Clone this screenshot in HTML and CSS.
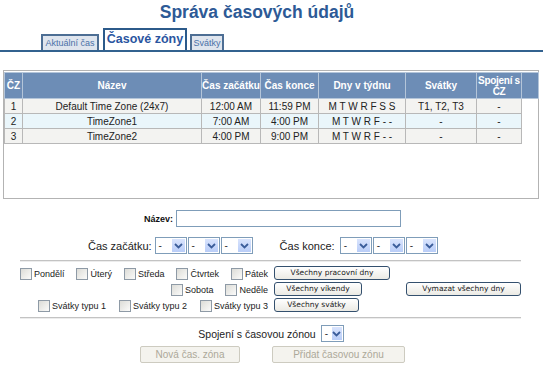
FILE: index.html
```html
<!DOCTYPE html>
<html lang="cs">
<head>
<meta charset="utf-8">
<title>Správa časových údajů</title>
<link rel="stylesheet" href="styles.css">
</head>
<body>
<h1 class="title">Správa časových údajů</h1>
<div class="tabs">
  <div class="tab tab-now">Aktuální čas</div>
  <div class="tab tab-active">Časové zóny</div>
  <div class="tab tab-hol">Svátky</div>
</div>

<div class="grid-box">
  <table class="grid">
    <colgroup>
      <col class="w-id"><col class="w-name"><col class="w-start"><col class="w-end"><col class="w-days"><col class="w-hol"><col class="w-link"><col class="w-scroll">
    </colgroup>
    <thead>
      <tr><th>ČZ</th><th>Název</th><th>Čas začátku</th><th>Čas konce</th><th>Dny v týdnu</th><th>Svátky</th><th class="th-link">Spojení s<br>ČZ</th><th></th></tr>
    </thead>
    <tbody>
      <tr class="r-odd"><td>1</td><td>Default Time Zone (24x7)</td><td>12:00 AM</td><td>11:59 PM</td><td>M T W R F S S</td><td>T1, T2, T3</td><td>-</td><td class="blank"></td></tr>
      <tr class="r-even"><td>2</td><td>TimeZone1</td><td>7:00 AM</td><td>4:00 PM</td><td>M T W R F - -</td><td>-</td><td>-</td><td class="blank"></td></tr>
      <tr class="r-odd"><td>3</td><td>TimeZone2</td><td>4:00 PM</td><td>9:00 PM</td><td>M T W R F - -</td><td>-</td><td>-</td><td class="blank"></td></tr>
    </tbody>
  </table>
</div>

<div class="name-row">
  <span class="name-label">Název:</span>
  <span class="text-input"></span>
</div>

<div class="time-row">
  <span class="time-label">Čas začátku:</span>
  <span class="sel"><span class="sel-val">-</span><span class="sel-btn"><svg viewBox="0 0 9 6" width="9" height="6"><path d="M1 1 L4.5 4.5 L8 1" fill="none" stroke="#3b5d9a" stroke-width="1.8"/></svg></span></span>
  <span class="sel"><span class="sel-val">-</span><span class="sel-btn"><svg viewBox="0 0 9 6" width="9" height="6"><path d="M1 1 L4.5 4.5 L8 1" fill="none" stroke="#3b5d9a" stroke-width="1.8"/></svg></span></span>
  <span class="sel"><span class="sel-val">-</span><span class="sel-btn"><svg viewBox="0 0 9 6" width="9" height="6"><path d="M1 1 L4.5 4.5 L8 1" fill="none" stroke="#3b5d9a" stroke-width="1.8"/></svg></span></span>
  <span class="time-label end-label">Čas konce:</span>
  <span class="sel"><span class="sel-val">-</span><span class="sel-btn"><svg viewBox="0 0 9 6" width="9" height="6"><path d="M1 1 L4.5 4.5 L8 1" fill="none" stroke="#3b5d9a" stroke-width="1.8"/></svg></span></span>
  <span class="sel"><span class="sel-val">-</span><span class="sel-btn"><svg viewBox="0 0 9 6" width="9" height="6"><path d="M1 1 L4.5 4.5 L8 1" fill="none" stroke="#3b5d9a" stroke-width="1.8"/></svg></span></span>
  <span class="sel"><span class="sel-val">-</span><span class="sel-btn"><svg viewBox="0 0 9 6" width="9" height="6"><path d="M1 1 L4.5 4.5 L8 1" fill="none" stroke="#3b5d9a" stroke-width="1.8"/></svg></span></span>
</div>

<div class="sep"></div>

<div class="days">
  <div class="checks row1">
    <span class="chk"><span class="box"></span>Pondělí</span>
    <span class="chk"><span class="box"></span>Úterý</span>
    <span class="chk"><span class="box"></span>Středa</span>
    <span class="chk"><span class="box"></span>Čtvrtek</span>
    <span class="chk"><span class="box"></span>Pátek</span>
  </div>
  <div class="btn-cell"><span class="btn b-work">Všechny pracovní dny</span></div>
  <div class="btn-cell"></div>

  <div class="checks row2">
    <span class="chk"><span class="box"></span>Sobota</span>
    <span class="chk"><span class="box"></span>Neděle</span>
  </div>
  <div class="btn-cell"><span class="btn b-week">Všechny víkendy</span></div>
  <div class="btn-cell"><span class="btn b-clear">Vymazat všechny dny</span></div>

  <div class="checks row3">
    <span class="chk"><span class="box"></span>Svátky typu 1</span>
    <span class="chk"><span class="box"></span>Svátky typu 2</span>
    <span class="chk"><span class="box"></span>Svátky typu 3</span>
  </div>
  <div class="btn-cell"><span class="btn b-hol">Všechny svátky</span></div>
  <div class="btn-cell"></div>
</div>

<div class="sep sep2"></div>

<div class="link-row">
  <span class="link-label">Spojení s časovou zónou</span>
  <span class="sel sel-small"><span class="sel-val">-</span><span class="sel-btn"><svg viewBox="0 0 9 6" width="9" height="6"><path d="M1 1 L4.5 4.5 L8 1" fill="none" stroke="#3b5d9a" stroke-width="1.8"/></svg></span></span>
</div>

<div class="actions">
  <span class="dbtn d-new">Nová čas. zóna</span>
  <span class="dbtn d-add">Přidat časovou zónu</span>
</div>
</body>
</html>
```

FILE: styles.css
```css
* { box-sizing: border-box; }

body {
  margin: 0;
  width: 543px;
  height: 376px;
  overflow: hidden;
  background: #ffffff;
  font-family: "Liberation Sans", Arial, sans-serif;
  color: #222222;
}

.title {
  margin: 0;
  height: 24px;
  line-height: 24px;
  padding-right: 29px;
  text-align: center;
  font-size: 17.5px;
  font-weight: bold;
  color: #2d5a96;
}

/* tabs */
.tabs {
  margin-top: 4px;
  height: 24px;
  display: flex;
  align-items: flex-end;
  padding-left: 41px;
  border-bottom: 2px solid #33628f;
}

.tab {
  height: 16px;
  border: 2px solid #4d6e94;
  border-bottom: none;
  background: #dfe5ee;
  color: #4b71a8;
  font-size: 9px;
  line-height: 14px;
  text-align: center;
  white-space: nowrap;
}

.tab-now { width: 58px; }
.tab-hol { width: 34px; margin-left: 3px; }

.tab-active {
  width: 84px;
  height: 22px;
  margin-left: 4px;
  border-color: #2c5a8a;
  background: #ffffff;
  color: #2a55a0;
  font-size: 12.5px;
  font-weight: bold;
  line-height: 19px;
}

/* grid */
.grid-box {
  margin: 18px 0 0 3px;
  width: 536px;
  height: 129px;
  border: 1px solid #b3b3b3;
  padding-top: 1px;
  background: #ffffff;
}

.grid {
  width: 534px;
  border-collapse: collapse;
  table-layout: fixed;
}

.w-id { width: 18px; }
.w-name { width: 179px; }
.w-start { width: 59px; }
.w-end { width: 58px; }
.w-days { width: 87px; }
.w-hol { width: 71px; }
.w-link { width: 45px; }
.w-scroll { width: 17px; }

.grid th {
  height: 26px;
  padding: 0;
  background: #6d8db6;
  color: #ffffff;
  font-size: 10px;
  font-weight: bold;
  line-height: 11px;
  border: 1px solid #b4c5d9;
  text-align: center;
  white-space: nowrap;
  overflow: hidden;
}

.grid th.th-link {
  letter-spacing: -0.3px;
}

.grid td {
  height: 15px;
  padding: 0;
  font-size: 10px;
  line-height: 13px;
  text-align: center;
  border: 1px solid #b8b8b8;
  color: #222222;
  white-space: nowrap;
}

.r-odd td { background: #f3f3f1; }
.r-even td { background: #eaf6fb; }

.grid td.blank {
  background: transparent;
  border: none;
}

/* name row */
.name-row {
  margin-top: 11px;
  display: flex;
  justify-content: center;
  align-items: center;
  height: 17px;
  padding-left: 2px;
}

.name-label {
  font-size: 9px;
  font-weight: bold;
  margin-right: 3px;
  color: #111111;
}

.text-input {
  width: 225px;
  height: 17px;
  border: 1px solid #7f9db9;
  background: #ffffff;
}

/* time row */
.time-row {
  margin-top: 10px;
  height: 17px;
  display: flex;
  align-items: center;
  padding-left: 88px;
}

.time-label {
  font-size: 11px;
  color: #222222;
  margin-right: 3px;
  white-space: nowrap;
}

.end-label {
  margin-left: 26px;
  margin-right: 5px;
}

.sel {
  width: 32px;
  height: 17px;
  border: 1px solid #7f9db9;
  background: #ffffff;
  display: flex;
  align-items: stretch;
  justify-content: space-between;
  margin-right: 1px;
  flex-shrink: 0;
}

.sel-val {
  font-size: 10px;
  line-height: 15px;
  padding-left: 3px;
  color: #333333;
}

.sel-btn {
  width: 15px;
  background: linear-gradient(#d9e4fd, #b9cdf8);
  border: 1px solid #ffffff;
  display: flex;
  align-items: center;
  justify-content: center;
}

.sel-small { width: 23px; }
.sel-small .sel-btn { width: 12px; }

/* separators */
.sep {
  margin: 6px 22px 0 20px;
  height: 2px;
  border-top: 1px solid #c3c3c3;
  border-bottom: 1px solid #ececec;
}

.sep2 { margin-top: 3px; }

/* day checkboxes */
.days {
  margin: 4px 22px 0 20px;
  display: grid;
  grid-template-columns: 250px 128px 115px;
  column-gap: 4px;
  grid-auto-rows: 16px;
}

.checks {
  display: flex;
  justify-content: flex-end;
  align-items: center;
  padding-right: 2px;
  white-space: nowrap;
}

.chk {
  display: flex;
  align-items: center;
  font-size: 9px;
  color: #222222;
  margin-left: 12px;
  flex-shrink: 0;
  white-space: nowrap;
}

.row3 .chk { margin-left: 13px; }

.box {
  width: 12px;
  height: 12px;
  border: 1px solid #8e9aa6;
  background: linear-gradient(135deg, #dcdcd7, #fbfbfa);
  margin-right: 2px;
  flex-shrink: 0;
}

.btn-cell {
  display: flex;
  align-items: flex-start;
}

.btn {
  height: 14px;
  border: 1px solid #34506e;
  border-radius: 3px;
  background: linear-gradient(#ffffff, #ebeae4);
  font-family: "DejaVu Sans", Verdana, sans-serif;
  font-size: 7.5px;
  line-height: 12px;
  text-align: center;
  color: #1a1a1a;
  white-space: nowrap;
}

.b-work { width: 116px; }
.b-week { width: 88px; }
.b-hol { width: 85px; }
.b-clear { width: 115px; }

/* link row */
.link-row {
  margin-top: 6px;
  height: 17px;
  display: flex;
  justify-content: center;
  align-items: center;
}

.link-label {
  font-size: 10.5px;
  margin-right: 5px;
  color: #222222;
  white-space: nowrap;
}

/* action buttons */
.actions {
  margin-top: 4px;
  display: flex;
  justify-content: center;
  gap: 32px;
  padding-left: 2px;
}

.dbtn {
  height: 17px;
  border: 1px solid #cdcbc0;
  border-radius: 2px;
  background: #f4f3ee;
  color: #aca899;
  font-size: 10px;
  line-height: 15px;
  text-align: center;
  white-space: nowrap;
}

.d-new { width: 100px; }
.d-add { width: 133px; }
```
